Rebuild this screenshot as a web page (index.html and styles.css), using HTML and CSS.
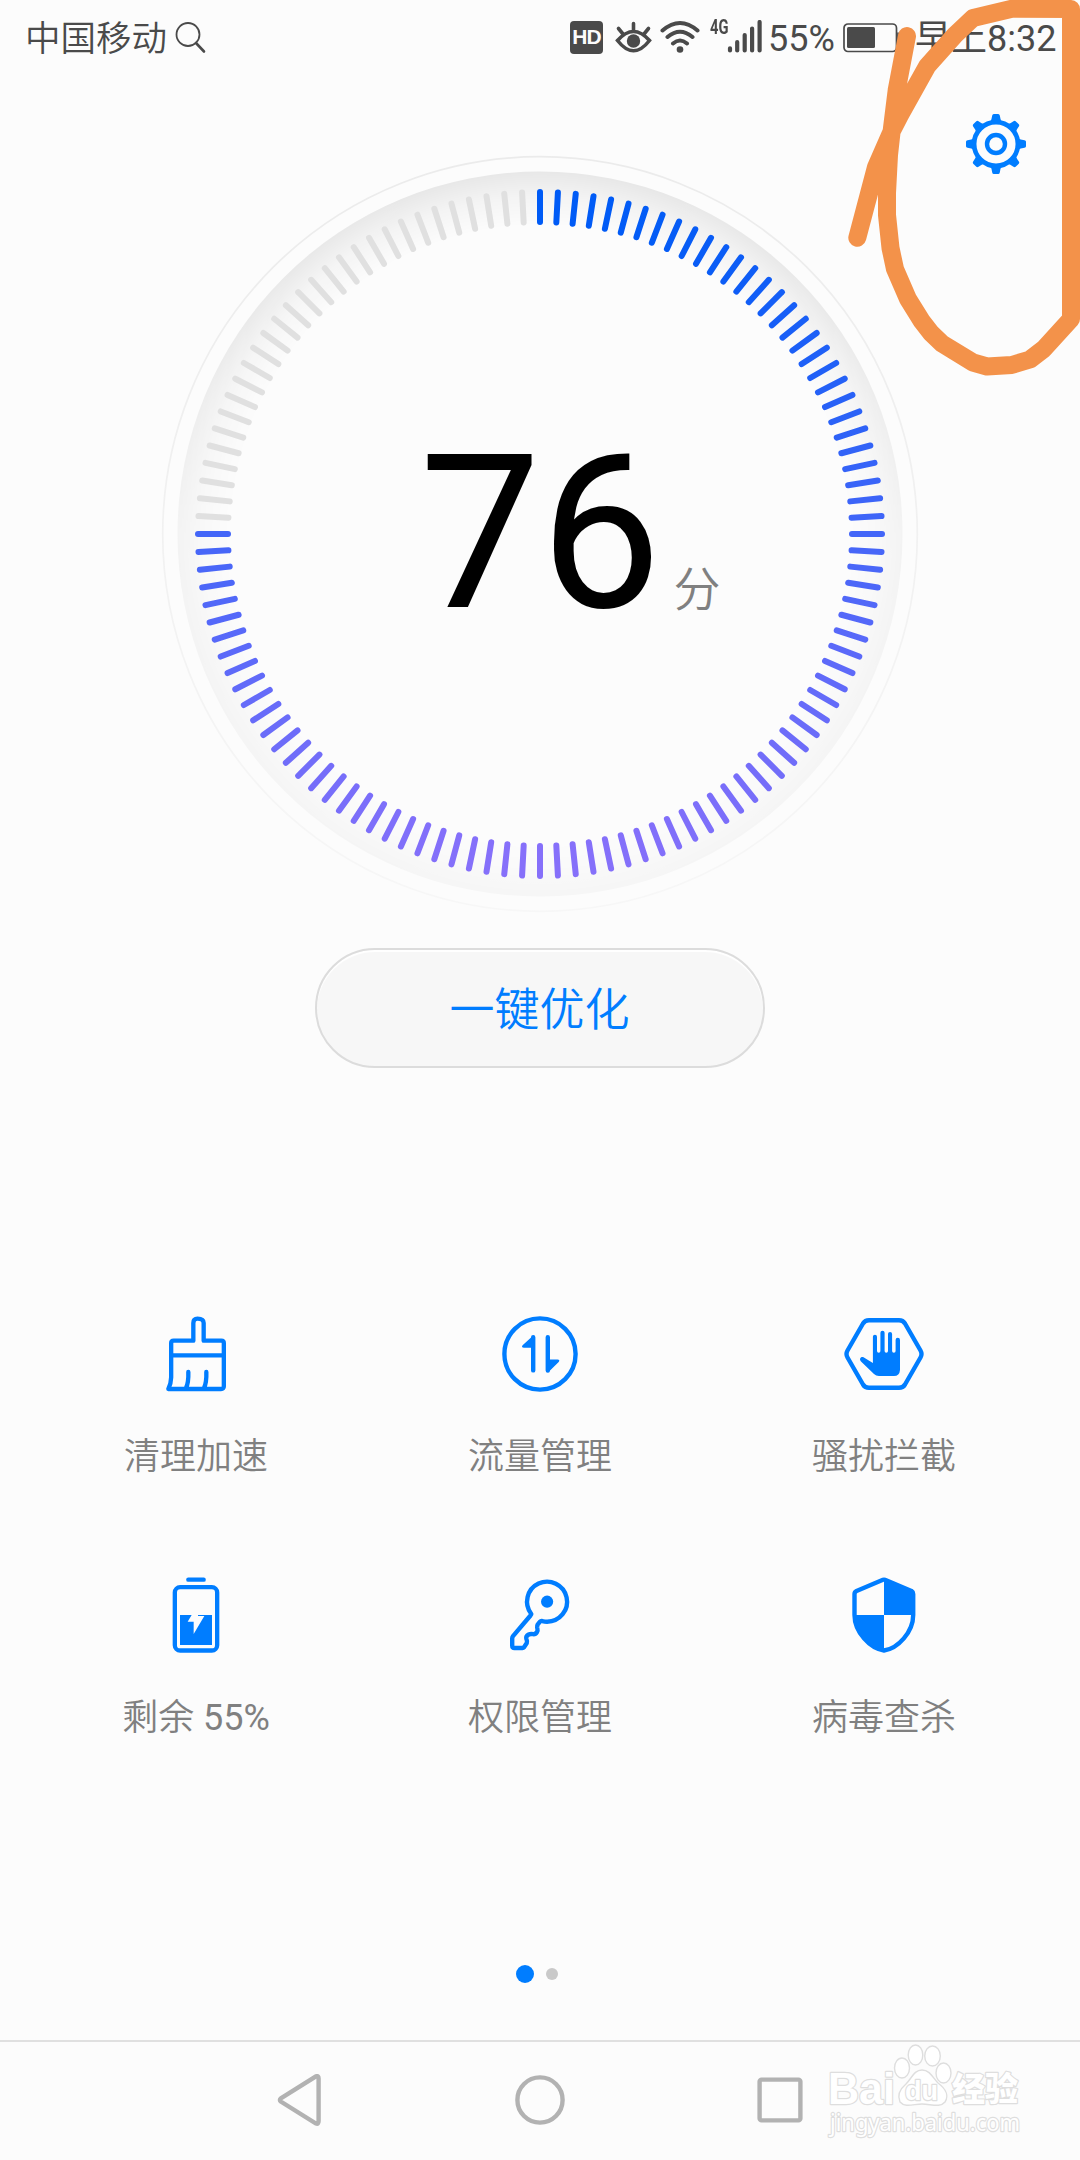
FILE: index.html
```html
<!DOCTYPE html>
<html lang="zh-CN">
<head>
<meta charset="utf-8">
<title>手机管家</title>
<link rel="stylesheet" href="styles.css">
</head>
<body>
<div class="screen">
  <header class="status">
    <span class="carrier">中国移动</span>
    <svg class="search" width="34" height="34" viewBox="0 0 34 34"><circle cx="14" cy="14.500" r="11.500"/><path d="M22 23L30 31.500" class="handle"/></svg>
    <span class="hd">HD</span>
    <svg class="eye" width="37" height="34" viewBox="0 0 37 34"><path d="M2.500 20.500Q18.500 2.500 34.500 20.500Q18.500 41 2.500 20.500Z"/><path d="M18.500 3.500V11M3.500 8.500L8 14M33.500 8.500L29 14"/><circle cx="18.500" cy="21" r="6.700" class="solid"/></svg>
    <svg class="wifi" width="40" height="34" viewBox="0 0 40 34"><path d="M2.500 10.500Q20 -4.500 37.500 10.500M7.500 17Q20 6.500 32.500 17M13 23.500Q20 17.500 27 23.500"/><circle cx="20" cy="29.500" r="3.300" class="solid"/></svg>
    <span class="net">4G</span>
    <svg class="bars" width="36" height="34" viewBox="0 0 36 34"><path d="M3 28.300V30.500M10.200 22V30.500M17.700 15V30.500M25.100 8.500V30.500M32.600 2V30.500"/></svg>
    <span class="percent">55%</span>
    <svg class="power" width="58" height="32" viewBox="0 0 58 32"><rect x="1" y="2" width="52.500" height="27.500" rx="4"/><rect x="4" y="5" width="28" height="21" rx="1.500" class="solid"/><path d="M55 11V21"/></svg>
    <span class="clock">早上8:32</span>
  </header>

  <section class="hero">
    <svg class="dial" width="760" height="760" viewBox="-380 -380 760 760">
      <defs>
        <radialGradient id="shade" gradientUnits="userSpaceOnUse" cx="0" cy="0" r="362.500">
          <stop offset=".85" stop-color="#000" stop-opacity="0"/>
          <stop offset=".93" stop-color="#000" stop-opacity=".032"/>
          <stop offset="1" stop-color="#000" stop-opacity=".08"/>
        </radialGradient>
        <linearGradient id="fade" x1="0" y1="0" x2="0" y2="1">
          <stop offset="0" stop-color="#fff"/>
          <stop offset=".2" stop-color="#e4e4e4"/>
          <stop offset=".5" stop-color="#707070"/>
          <stop offset="1" stop-color="#505050"/>
        </linearGradient>
        <linearGradient id="ring" x1="0" y1="0" x2="0" y2="1">
          <stop offset="0" stop-color="#ebebeb"/>
          <stop offset="1" stop-color="#f7f7f7"/>
        </linearGradient>
        <mask id="soften"><rect x="-364" y="-364" width="728" height="728" fill="url(#fade)"/></mask>
      </defs>
      <circle r="377.300" fill="none" stroke="url(#ring)" stroke-width="1.700"/>
      <circle r="362.500" fill="url(#shade)" mask="url(#soften)"/>
      <g id="ticks" class="ticks"></g>
      <text x="-120.500" y="73" class="score">76</text>
      <text x="133.500" y="72" class="unit">分</text>
    </svg>
    <svg class="gear" width="60" height="60" viewBox="-30 -30 60 60">
      <defs><path id="tooth" d="M-5.500 -22.500Q-4.500 -24 -3.800 -28.500Q-3.500 -30 -2.200 -30H2.200Q3.500 -30 3.800 -28.500Q4.500 -24 5.500 -22.500Z"/></defs>
      <g fill="#007dff"><use href="#tooth"/><use href="#tooth" transform="rotate(45)"/><use href="#tooth" transform="rotate(90)"/><use href="#tooth" transform="rotate(135)"/><use href="#tooth" transform="rotate(180)"/><use href="#tooth" transform="rotate(225)"/><use href="#tooth" transform="rotate(270)"/><use href="#tooth" transform="rotate(315)"/></g>
      <circle r="21.900" class="gear-ring"/><circle r="9" class="gear-ring hub"/>
    </svg>
  </section>

  <button class="optimize">一键优化</button>

  <section class="grid">
    <div class="tile">
      <svg class="icon" viewBox="168 72 240 240"><g stroke-width="13"><path d="M280 152V99Q280 86 292.500 86Q311 86 311 99V152H364Q371.500 152 371.500 159V289Q371.500 297 363 297H205Q213 281 213.500 262V159Q213.500 152 221 152H280M214 196H371M265 246Q266 278 258 294M319 246Q320 278 312 294" /></g></svg>
      <span>清理加速</span>
    </div>
    <div class="tile">
      <svg class="icon" viewBox="0 0 80 80"><circle cx="40" cy="40" r="35.600"/><path d="M33.200 23.200V56.400M47.800 23.200V56.600"/><path class="fill" d="M33.500 21.200L22.600 31.200Q20.900 33.500 24 33.700H33ZM48 58.500L58.700 48Q60.400 45.700 57.500 45.500H48Z"/></svg>
      <span>流量管理</span>
    </div>
    <div class="tile">
      <svg class="icon" viewBox="0 0 80 80"><path d="M25 6.200H55Q59 6.200 61 9.500L76.500 36.500Q78.500 40 76.500 43.500L61 70.500Q59 73.800 55 73.800H25Q21 73.800 19 70.500L3.500 43.500Q1.500 40 3.500 36.500L19 9.500Q21 6.200 25 6.200Z"/><path class="fill" d="M28.900 48V22.700a2.050 2.050 0 0 1 4.100 0V37a1.700 1.700 0 0 0 3.400 0V18.800a2.100 2.100 0 0 1 4.200 0V37a1.700 1.700 0 0 0 3.400 0V20.100a2.050 2.050 0 0 1 4.100 0V37a1.750 1.750 0 0 0 3.500 0V25.900a2.200 2.200 0 0 1 4.400 0V56Q55.500 62 50 62H35Q32 62 30 60L17 47.500C14.500 44.500 17.500 42.200 19.500 43.200L28.900 49Z"/></svg>
      <span>骚扰拦截</span>
    </div>
    <div class="tile">
      <svg class="icon" viewBox="168 75 240 240"><g stroke-width="13"><rect x="224.500" y="111.500" width="127" height="190" rx="16"/><path d="M265 89H311"/></g><path class="fill" d="M240 195H275L263 215H281V252L313 198H294V195H336V285H240Z"/></svg>
      <span>剩余 <b class="value">55%</b></span>
    </div>
    <div class="tile">
      <svg class="icon" viewBox="0 0 80 80"><path d="M31.300 39A20 20 0 1 1 47 46.700Q44.500 46.700 42.500 46.100Q41 45.500 40 46.700L37.800 49.300Q37 50.500 37.200 52.500Q38 55.500 37 57Q35.600 59.300 33.500 59.200Q30.500 58.600 28.700 59.500Q25.800 61.200 26.300 63.500Q27.400 66.500 26.800 68L24 72.300Q23.400 73 22.500 73H14.500Q12.200 73 12.200 70.500V63.500Q12.200 62.200 13 61.200L30.500 40.500Q31.300 39.500 31.300 39Z"/><circle class="fill" cx="47.100" cy="26.700" r="6.100"/></svg>
      <span>权限管理</span>
    </div>
    <div class="tile">
      <svg class="icon" viewBox="0 0 80 80"><path d="M39 4.800Q40 4.400 41 4.800L67.500 16Q69.200 17 69.200 19V40C69.200 57 54 73.500 40 75.500C26 73.500 10.500 57 10.500 40V19Q10.500 17 12.500 16Z"/><path class="fill" d="M40 5L69 17V40H40ZM40 40V75.500C26 73 11 57 11 40Z"/></svg>
      <span>病毒查杀</span>
    </div>
  </section>

  <div class="pager"><i class="dot current"></i><i class="dot"></i></div>

  <nav class="nav">
    <svg width="54" height="54" viewBox="0 0 54 54"><path d="M7.800 24.400L43 2.300Q45.600 1.500 45.600 4.500V47Q45.600 50.500 43 49.500L7.800 27.600Q6 26 7.800 24.400Z"/></svg>
    <svg width="54" height="54" viewBox="0 0 54 54"><circle cx="27" cy="26" r="22.600"/></svg>
    <svg width="54" height="54" viewBox="0 0 54 54"><rect x="6.600" y="5.600" width="40.800" height="40.800" rx="2"/></svg>
  </nav>

  <svg class="watermark" width="210" height="110" viewBox="820 2035 210 110">
    <text x="828" y="2104" textLength="67" lengthAdjust="spacingAndGlyphs" class="brand">Bai</text>
    <g class="paw"><ellipse cx="902" cy="2068" rx="7.500" ry="10"/><ellipse cx="915.500" cy="2055" rx="7.300" ry="10"/><ellipse cx="932.500" cy="2056" rx="7.800" ry="10"/><ellipse cx="943.500" cy="2073" rx="7.500" ry="10"/><path d="M922 2070C930 2070 933 2078 938 2083C946 2089 949 2096 945 2102C940 2108 931 2104 922 2104C914 2104 905 2108 900 2102C897 2095 900 2089 906 2084C912 2078 914 2070 922 2070Z"/></g>
    <text x="905" y="2100" textLength="33" lengthAdjust="spacingAndGlyphs" class="du">du</text>
    <text x="952" y="2101" textLength="66" lengthAdjust="spacingAndGlyphs" class="cn">经验</text>
    <text x="830" y="2131" textLength="190" lengthAdjust="spacingAndGlyphs" class="url">jingyan.baidu.com</text>
  </svg>

  <svg class="marker" width="240" height="380" viewBox="840 0 240 380"><path d="M857.300 237.700L876 167L892 130.500L900 115L927.300 66L955 35L973 18L1012 8.700L1071 9V319L1043.700 349L1030 359.500L1011.700 365L987 366.500L973 362.500L941.700 343.300L931 333L921.700 321L908 299L895 269L890.500 248L887 215V193L889 155L892 128L896.700 90L907 36"/></svg>
</div>
<script src="dial.js"></script>
</body>
</html>
```
FILE: dial.js
```js
// 120 ticks, 3 degrees apart; the first 91 are lit.
const TOTAL = 120, LIT = 91;
const from = [0, 91, 246], to = [134, 112, 250];
const group = document.getElementById('ticks');
for (let i = 0; i < TOTAL; i++) {
  const line = document.createElementNS('http://www.w3.org/2000/svg', 'line');
  line.setAttribute('y1', -342);
  line.setAttribute('y2', -312);
  line.setAttribute('transform', `rotate(${i * 3})`);
  if (i < LIT) {
    const t = (1 - Math.cos(i * 3 * Math.PI / 180)) / 2;
    line.setAttribute('stroke', `rgb(${from.map((c, k) => Math.round(c + (to[k] - c) * t))})`);
  }
  group.appendChild(line);
}
```
FILE: styles.css
```css
* { box-sizing: border-box; }
body { margin: 0; background: #fcfcfc; font-family: Roboto, "Noto Sans CJK SC", sans-serif; }
svg { display: block; flex: none; }
.screen { position: relative; display: flex; flex-direction: column; width: 1080px; height: 2160px; overflow: hidden; }

.status { display: flex; align-items: center; height: 74px; padding-left: 25px; color: #4a4a4a; font-size: 36px; line-height: 52px; white-space: nowrap; }
.status svg { fill: none; stroke: #4a4a4a; stroke-linecap: round; }
.status .solid { fill: #4a4a4a; stroke: none; }
.carrier { width: 149px; margin-top: 3px; font-size: 35.500px; font-weight: 350; }
.search { stroke-width: 1.8; }
.search .handle { stroke-width: 2.6; }
.hd { display: flex; align-items: center; justify-content: center; width: 33px; height: 33px; margin-left: 362px; border-radius: 4px; background: #4a4a4a; color: #fcfcfc; font: 700 21px "Liberation Sans", sans-serif; letter-spacing: -1px; }
.eye { margin-left: 12px; stroke-width: 3.6; }
.wifi { margin-left: 8px; stroke-width: 4; }
.net { width: 18px; margin: -20px 0 0 10px; font-size: 21px; line-height: 20px; font-weight: 700; transform: scaleX(.7); transform-origin: left; }
.bars { margin-left: -1px; stroke-width: 4.2; }
.percent { width: 65px; margin: 3px 0 0 5px; }
.power { margin: 2px 0 0 10px; stroke-width: 1.7; }
.clock { margin: 3px 0 0 14px; }

.hero { display: grid; height: 840px; padding: 40px 54px 0 0; }
.dial, .gear { grid-area: 1 / 1; }
.dial { margin: 40px 0 0 160px; }
.gear { justify-self: end; }
.gear-ring { fill: none; stroke: #007dff; stroke-width: 4.7; }
.gear-ring.hub { stroke-width: 4.4; }
.ticks { stroke: #e0e0e0; stroke-width: 6; stroke-linecap: round; }
.score { font-size: 216px; letter-spacing: -1px; fill: #000; }
.unit { font-size: 47px; font-weight: 350; fill: #808080; }

.optimize { align-self: center; width: 450px; height: 120px; margin: 34px 0 0; padding: 0 1px 4px 0; border: 2px solid #dcdcdc; border-radius: 60px; background: #f7f7f7; box-shadow: inset 0 2px 1px #fff; color: #007dff; font: 350 45px "Noto Sans CJK SC", sans-serif; }

.grid { display: grid; grid-template-columns: repeat(3, 344px); grid-auto-rows: 261px; margin: 246px 24px 0; }
.tile { display: flex; flex-direction: column; align-items: center; color: #808080; font-size: 36px; line-height: 52px; font-weight: 350; }
.tile span { margin-top: 37px; }
.value { font-weight: 400; }
.icon { width: 80px; height: 80px; fill: none; stroke: #007dff; stroke-width: 4.4; stroke-linecap: round; stroke-linejoin: round; }
.icon .fill { fill: #007dff; stroke: none; }

.pager { display: flex; align-items: center; justify-content: center; gap: 12px; height: 18px; margin: 129px 0 0; padding-right: 6px; }
.dot { width: 12px; height: 12px; border-radius: 50%; background: #c9c9c9; }
.dot.current { width: 18px; height: 18px; background: #007dff; }

.nav { display: flex; justify-content: space-between; align-items: center; height: 120px; margin-top: auto; padding: 0 273px; border-top: 2px solid #e0e0e0; }
.nav svg { fill: none; stroke: #b2b2b2; stroke-width: 4.4; }

.watermark { position: absolute; left: 820px; top: 2035px; fill: #fff; stroke: #dedede; stroke-width: 1.4; }
.watermark text { paint-order: stroke; stroke-width: 2.4; stroke-linejoin: round; }
.brand { font: 700 44px "Liberation Sans", sans-serif; }
.du { font: 700 28px "Liberation Sans", sans-serif; }
.cn { font: 900 33px "Noto Sans CJK SC", sans-serif; }
.url { font: 400 23px "Noto Sans", sans-serif; }

.marker { position: absolute; left: 840px; top: 0; fill: none; stroke: #f3924a; stroke-width: 18; stroke-linecap: round; stroke-linejoin: round; }
```
